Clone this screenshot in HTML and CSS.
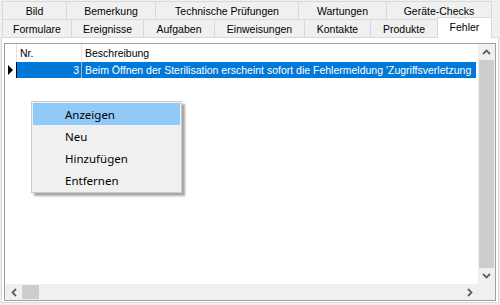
FILE: index.html
```html
<!DOCTYPE html>
<html lang="de">

<head>
    <meta charset="UTF-8">
    <title>Fehler</title>
    <link rel="stylesheet" href="styles.css">
</head>

<body>
    <div class="tabctl">
        <div class="tab-row">
            <div class="tab" style="width: 65px">Bild</div>
            <div class="tab" style="width: 90px">Bemerkung</div>
            <div class="tab" style="width: 144px">Technische Prüfungen</div>
            <div class="tab" style="width: 89px">Wartungen</div>
            <div class="tab" style="width: 106px">Geräte-Checks</div>
        </div>
        <div class="tab-row">
            <div class="tab" style="width: 70px">Formulare</div>
            <div class="tab" style="width: 73px">Ereignisse</div>
            <div class="tab" style="width: 72px">Aufgaben</div>
            <div class="tab" style="width: 91px">Einweisungen</div>
            <div class="tab" style="width: 67px">Kontakte</div>
            <div class="tab" style="width: 68px">Produkte</div>
            <div class="tab active" style="width: 55px">Fehler</div>
        </div>

        <div class="panel">
            <div class="grid">
                <div class="grid-body">
                    <div class="row head">
                        <div class="cell rowhead"></div>
                        <div class="cell nr">Nr.</div>
                        <div class="cell desc">Beschreibung</div>
                    </div>
                    <div class="row selected">
                        <div class="cell rowhead">
                            <svg width="5" height="10" viewBox="0 0 5 10"><path d="M0 0 L5 5 L0 10 Z" fill="#000"/></svg>
                        </div>
                        <div class="cell nr num">3</div>
                        <div class="cell desc">Beim Öffnen der Sterilisation erscheint sofort die Fehlermeldung 'Zugriffsverletzung</div>
                    </div>
                </div>

                <div class="vscroll">
                    <div class="arrow">
                        <svg width="9" height="6" viewBox="0 0 9 6"><path d="M1 5 L4.5 1.5 L8 5" fill="none" stroke="#606060" stroke-width="1.8"/></svg>
                    </div>
                    <div class="thumb"></div>
                    <div class="arrow">
                        <svg width="9" height="6" viewBox="0 0 9 6"><path d="M1 1 L4.5 4.5 L8 1" fill="none" stroke="#606060" stroke-width="1.8"/></svg>
                    </div>
                </div>

                <div class="hscroll">
                    <div class="arrow">
                        <svg width="6" height="9" viewBox="0 0 6 9"><path d="M5 1 L1.5 4.5 L5 8" fill="none" stroke="#606060" stroke-width="1.8"/></svg>
                    </div>
                    <div class="thumb"></div>
                    <div class="track"></div>
                    <div class="arrow">
                        <svg width="6" height="9" viewBox="0 0 6 9"><path d="M1 1 L4.5 4.5 L1 8" fill="none" stroke="#606060" stroke-width="1.8"/></svg>
                    </div>
                </div>

                <div class="corner"></div>
            </div>
        </div>
    </div>

    <!-- Kontextmenü -->
    <div class="menu">
        <div class="item hover">Anzeigen</div>
        <div class="item">Neu</div>
        <div class="item">Hinzufügen</div>
        <div class="item">Entfernen</div>
    </div>
</body>

</html>
```

FILE: styles.css
```css
body {
    margin: 0;
    padding: 0;
    width: 500px;
    height: 305px;
    overflow: hidden;
    background: #f0f0f0;
    font-family: "Liberation Sans", Arial, sans-serif;
    font-size: 10.5px;
    color: #000;
    position: relative;
}

.tabctl {
    height: 305px;
    padding: 1px 1px 2px 1px;
    box-sizing: border-box;
    display: flex;
    flex-direction: column;
}

.tab-row {
    display: flex;
    align-items: flex-end;
    height: 18px;
    margin-left: 1px;
}

.tab {
    height: 18px;
    box-sizing: border-box;
    border: 1px solid #d9d9d9;
    border-bottom: none;
    margin-right: -1px;
    background: #f0f0f0;
    display: flex;
    align-items: center;
    justify-content: center;
    padding-top: 1px;
    white-space: nowrap;
}

.tab.active {
    height: 21px;
    margin-bottom: -1px;
    margin-top: -3px;
    background: #fff;
    align-items: flex-start;
    padding-top: 3px;
    position: relative;
    z-index: 1;
}

.panel {
    flex: 1;
    background: #fff;
    border: 1px solid #d9d9d9;
    padding: 5px 2px 1px 2px;
    display: flex;
}

.grid {
    flex: 1;
    border: 1px solid #a0a0a0;
    display: grid;
    grid-template-columns: 1fr 17px;
    grid-template-rows: 1fr 16px;
    background: #fff;
}

.grid-body {
    overflow: hidden;
}

.row {
    display: flex;
}

.row.head {
    height: 18px;
}

.row.selected {
    height: 16px;
}

.cell {
    box-sizing: border-box;
    display: flex;
    align-items: center;
    white-space: nowrap;
    overflow: hidden;
}

.rowhead {
    width: 12px;
    border-right: 1px solid #e3e3e3;
    justify-content: center;
}

.nr {
    width: 65px;
    padding-left: 3px;
    border-right: 1px solid #e3e3e3;
}

.desc {
    flex: 1;
    padding-left: 3px;
}

.selected .rowhead {
    border-right: 1px solid #000;
}

.selected .nr,
.selected .desc {
    background: #0078d7;
    color: #fff;
}

.selected .nr {
    border-right: 1px solid #9ab8d8;
}

.selected .desc {
    margin-right: 2px;
}

.num {
    justify-content: flex-end;
    padding-right: 2px;
}

.vscroll {
    background: #f0f0f0;
    display: flex;
    flex-direction: column;
}

.vscroll .arrow {
    height: 16px;
    display: flex;
    align-items: center;
    justify-content: center;
}

.vscroll .thumb {
    flex: 1;
    background: #cdcdcd;
    margin: 0 1px;
}

.hscroll {
    background: #f0f0f0;
    display: flex;
}

.hscroll .arrow {
    width: 17px;
    display: flex;
    align-items: center;
    justify-content: center;
}

.hscroll .thumb {
    width: 17px;
    background: #cdcdcd;
    margin: 1px 0;
}

.hscroll .track {
    flex: 1;
}

.corner {
    background: #f0f0f0;
}

.menu {
    position: absolute;
    left: 31px;
    top: 101px;
    width: 151px;
    box-sizing: border-box;
    padding: 1px;
    background: #f0f0f0;
    border: 1px solid #cccccc;
    box-shadow: 3px 3px 2px rgba(0, 0, 0, 0.35);
    font-family: "Noto Sans", "Open Sans", sans-serif;
    font-size: 11.5px;
}

.item {
    height: 22px;
    padding-left: 32px;
    display: flex;
    align-items: center;
}

.item.hover {
    background: #91c9f7;
}
```
